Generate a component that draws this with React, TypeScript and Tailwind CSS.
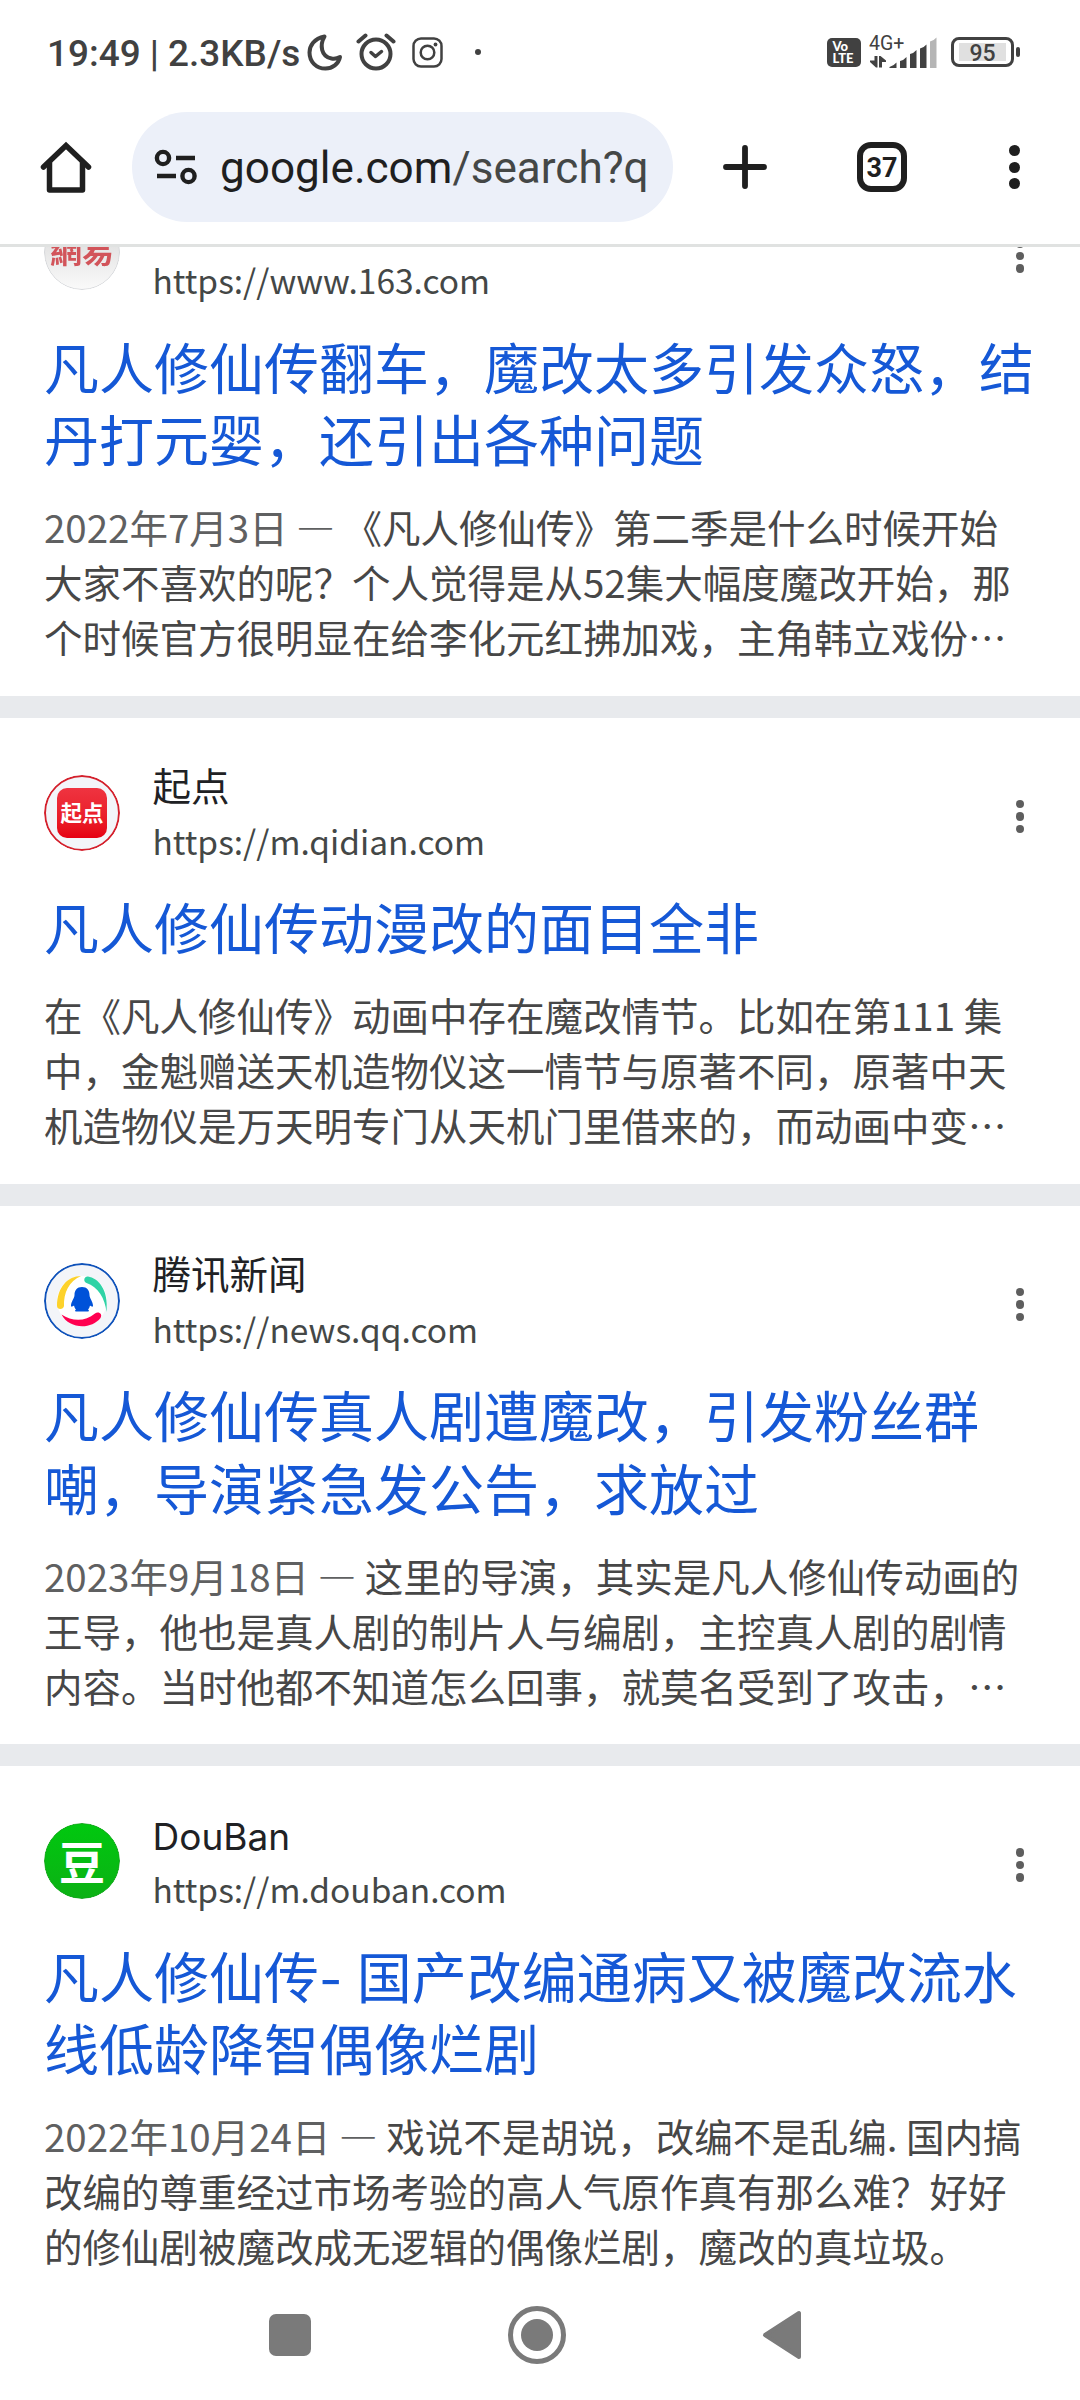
import type { ReactNode } from "react";

interface Result {
  id: string;
  site?: string;
  url: string;
  icon: ReactNode;
  title: string[];
  date?: string;
  snippet: string[];
}

const NeteaseIcon = () => (
  <div className="flex h-full w-full items-center justify-center rounded-full border border-[#d5d7da] bg-linear-to-b from-[#d4d4d4] to-[#fafafa] pb-[7px]">
    <span className="font-['Noto_Sans_CJK_TC',sans-serif] text-[32px] leading-none font-bold whitespace-nowrap text-[#d2545a] blur-[0.7px]">
      網易
    </span>
  </div>
);

const QidianIcon = () => (
  <div className="flex h-full w-full items-center justify-center rounded-full border-2 border-[#d4202c] bg-[#f3f5f9]">
    <div className="flex h-[50px] w-[50px] items-center justify-center rounded-[10px] bg-linear-to-b from-[#ef3340] to-[#e60012] pb-[2px]">
      <span className="text-[21.5px] leading-none font-bold whitespace-nowrap text-white">
        起点
      </span>
    </div>
  </div>
);

const TencentIcon = () => (
  <svg viewBox="0 0 76 76" className="h-full w-full">
    <circle cx="38" cy="38" r="37" fill="#f3f5f9" stroke="#0f52ba" strokeWidth="2" />
    <circle cx="38" cy="38" r="25" fill="#fff" />
    <path d="M37 13C24 13 13 24 13 43c0 4 6.500 4 7 0C19.500 30 25 18 37 13z" fill="#fdd22b" />
    <path d="M44 13.500c10 1.500 21 13 18.500 35.500C61 35 54 24 42.500 20c-4-2-2-7 1.500-6.500z" fill="#2fd3a6" />
    <path d="M17.500 51.500C25 66 47 67 56.500 55c2.500-4-2-7-5.500-4.500C41 59 28 58.500 17.500 51.500z" fill="#ff0050" />
    <path
      d="M38 24c-5 0-7.500 3.500-7.500 8 0 3-3.500 7-3.500 10.500 0 2 1.500 1 3 0 .5 2 1 3 2 4-1 .5-1.500 2 0 2h12c1.500 0 1-1.500 0-2 1-1 1.500-2 2-4 1.500 1 3 2 3 0 0-3.500-3.500-7.500-3.500-10.500 0-4.500-2.500-8-7.500-8z"
      fill="#0052d9"
    />
  </svg>
);

const DoubanIcon = () => (
  <div className="flex h-full w-full items-center justify-center rounded-full border border-[#14a51c] bg-linear-to-b from-[#00c80f] to-[#0bb114] pb-[3px]">
    <span className="text-[46px] leading-none font-bold text-white">豆</span>
  </div>
);

const results: Result[] = [
  {
    id: "netease",
    url: "https://www.163.com",
    icon: <NeteaseIcon />,
    title: ["凡人修仙传翻车，魔改太多引发众怒，结", "丹打元婴，还引出各种问题"],
    date: "2022年7月3日",
    snippet: [
      "《凡人修仙传》第二季是什么时候开始",
      "大家不喜欢的呢？个人觉得是从52集大幅度魔改开始，那",
      "个时候官方很明显在给李化元红拂加戏，主角韩立戏份…",
    ],
  },
  {
    id: "qidian",
    site: "起点",
    url: "https://m.qidian.com",
    icon: <QidianIcon />,
    title: ["凡人修仙传动漫改的面目全非"],
    snippet: [
      "在《凡人修仙传》动画中存在魔改情节。比如在第111 集",
      "中，金魁赠送天机造物仪这一情节与原著不同，原著中天",
      "机造物仪是万天明专门从天机门里借来的，而动画中变…",
    ],
  },
  {
    id: "tencent",
    site: "腾讯新闻",
    url: "https://news.qq.com",
    icon: <TencentIcon />,
    title: ["凡人修仙传真人剧遭魔改，引发粉丝群", "嘲，导演紧急发公告，求放过"],
    date: "2023年9月18日",
    snippet: [
      "这里的导演，其实是凡人修仙传动画的",
      "王导，他也是真人剧的制片人与编剧，主控真人剧的剧情",
      "内容。当时他都不知道怎么回事，就莫名受到了攻击，…",
    ],
  },
  {
    id: "douban",
    site: "DouBan",
    url: "https://m.douban.com",
    icon: <DoubanIcon />,
    title: ["凡人修仙传- 国产改编通病又被魔改流水", "线低龄降智偶像烂剧"],
    date: "2022年10月24日",
    snippet: [
      "戏说不是胡说，改编不是乱编. 国内搞",
      "改编的尊重经过市场考验的高人气原作真有那么难？好好",
      "的修仙剧被魔改成无逻辑的偶像烂剧，魔改的真垃圾。",
    ],
  },
];

function StatusBar() {
  return (
    <div className="flex h-[104px] shrink-0 items-center pr-[60px] pl-[47px] text-[#414141]">
      <span className="w-[259px] pt-[5px] text-[36.9px] leading-none font-medium whitespace-nowrap">
        19:49 | 2.3KB/s
      </span>

      <svg width="38" height="38" viewBox="0 0 38 38" fill="none" stroke="currentColor" strokeWidth="4" strokeLinejoin="round">
        <path d="M18.500 3.500C8 5.500 3.500 13 3.500 19.500 3.500 29 10.500 35.500 19.500 35.500c7 0 13-4.500 14.500-11.500-3 1.700-6 2-8.500 1.500C15 23.500 13.500 12 18.500 3.500z" />
      </svg>

      <svg className="ml-[12px]" width="40" height="40" viewBox="0 0 40 40" fill="none" stroke="currentColor" strokeWidth="4" strokeLinecap="round" strokeLinejoin="round">
        <circle cx="20" cy="22" r="14.500" />
        <path d="M2.500 9.500l7-6M37.500 9.500l-7-6" />
        <path d="M15 20.500l4.500 4 6-5" strokeWidth="3.500" />
      </svg>

      <svg className="ml-[16px]" width="31" height="31" viewBox="0 0 31 31" fill="none" stroke="currentColor" strokeWidth="2.500">
        <rect x="1.500" y="1.500" width="28" height="28" rx="7.500" />
        <circle cx="15.500" cy="15.500" r="6.800" />
        <circle cx="23.500" cy="7.500" r="1.900" fill="currentColor" stroke="none" />
      </svg>

      <div className="ml-[32px] h-[6px] w-[6px] rounded-full bg-[#414141]" />

      <div className="mr-[8px] ml-auto flex h-[29px] w-[34px] flex-col justify-center rounded-[5px] bg-[#414141] pl-[5.500px] font-['Lato',sans-serif] text-[13px] leading-[12px] font-black text-white">
        <span>Vo</span>
        <span>LTE</span>
      </div>

      <svg width="72" height="40" viewBox="0 0 72 40" fill="currentColor">
        <text x="0" y="18" fontSize="19.500">
          4G+
        </text>
        <path d="M5.500 24h3v11.500H7L1 30v-1.500h4.500z" />
        <path d="M10 35.500h3V30h4v-1.500L11.500 24H10z" />
        <path d="M20.500 36v-1q4-1 7-4.500V36z" />
        <path d="M31 36v-7q4-1 6.500-4v11z" />
        <path d="M41 36V22q4-1 6.500-4v18z" />
        <path d="M51 36V16.500q4-1 6.500-4V36z" />
        <path d="M61 36V9.500q4-1 6.500-4V36z" fill="#b5b5b5" />
      </svg>

      <div className="ml-[10px] flex h-[30px] w-[63px] items-center justify-center rounded-[8px] border-[3px] border-[#414141]">
        <span className="flex h-[18px] w-[47px] items-center justify-center bg-[#e0e0e0] pt-[3px] text-[23px] leading-none font-medium">
          95
        </span>
      </div>
      <div className="ml-[2px] h-[10px] w-[4px] rounded-[2px] bg-[#414141]" />
    </div>
  );
}

function Toolbar() {
  return (
    <div className="flex h-[143px] shrink-0 items-center border-b-[3px] border-[#e0e2e1] pb-[14px] text-[#1f1f1f]">
      <svg className="ml-[40px] shrink-0" width="52" height="52" viewBox="0 0 52 52" fill="none" stroke="currentColor" strokeWidth="5.500" strokeLinecap="round" strokeLinejoin="round">
        <path d="M3.500 26L26 4.500 48.500 26" strokeLinejoin="miter" />
        <path d="M9.500 22v27h33V22" />
      </svg>

      <div className="ml-[40px] flex h-[110px] w-[541px] shrink-0 items-center rounded-full bg-[#ecf0f9] pl-[22px]">
        <svg width="44" height="36" viewBox="0 0 44 36" fill="none" stroke="currentColor" strokeWidth="4.400">
          <circle cx="9" cy="9" r="6.100" />
          <path d="M22 9h19M3 27h19" />
          <circle cx="34.500" cy="27" r="6.100" />
        </svg>
        <span className="ml-[22px] pt-[3px] text-[44.1px] leading-none whitespace-nowrap">
          google.com<span className="text-[#444746]">/search?q</span>
        </span>
      </div>

      <svg className="ml-[49px] shrink-0" width="46" height="46" viewBox="0 0 46 46" stroke="currentColor" strokeWidth="5.800" strokeLinecap="round">
        <path d="M23 4v38M4 23h38" />
      </svg>

      <div className="ml-[89px] flex h-[50px] w-[50px] shrink-0 items-center justify-center rounded-[14px] border-[6px] border-[#1f1f1f] pt-[2px] text-[27px] leading-none font-bold">
        37
      </div>

      <div className="ml-[102px] flex flex-col gap-[5.500px]">
        <i className="h-[11px] w-[11px] rounded-full bg-[#1f1f1f]" />
        <i className="h-[11px] w-[11px] rounded-full bg-[#1f1f1f]" />
        <i className="h-[11px] w-[11px] rounded-full bg-[#1f1f1f]" />
      </div>
    </div>
  );
}

function ResultCard({ result }: { result: Result }) {
  return (
    <article className="shrink-0 border-b-[22px] border-[#e8eaed] bg-white px-[44px] pt-[43px] pb-[31.500px] font-['Noto_Sans_CJK_SC',sans-serif]">
      <div className="flex h-[128.500px]">
        <div className="mt-[14px] h-[76px] w-[76px] shrink-0 overflow-hidden rounded-full">
          {result.icon}
        </div>
        <div className="ml-[32.500px] flex-1 whitespace-nowrap">
          <div
            className={
              result.site === "DouBan"
                ? "h-[55px] font-['Inter',sans-serif] text-[37px] leading-[55px] text-[#202124]"
                : "h-[55px] text-[38.5px] leading-[46px] text-[#202124]"
            }
          >
            {result.site}
          </div>
          <div className="text-[33.5px] leading-[50px] text-[#444746]">
            {result.url}
          </div>
        </div>
        <div className="mt-[39px] mr-[12px] flex flex-col gap-[4px]">
          <i className="h-[8.500px] w-[8.500px] rounded-full bg-[#5e5e5e]" />
          <i className="h-[8.500px] w-[8.500px] rounded-full bg-[#5e5e5e]" />
          <i className="h-[8.500px] w-[8.500px] rounded-full bg-[#5e5e5e]" />
        </div>
      </div>

      <h3 className="text-[55px] leading-[72.5px] font-normal whitespace-nowrap text-[#1558d6]">
        {result.title.map((line) => (
          <div key={line}>
            {line.split(/(- )/).map((part) =>
              part === "- " ? (
                <span key={part} className="font-['Inter',sans-serif] text-[51px] leading-none">
                  {part}
                </span>
              ) : (
                part
              )
            )}
          </div>
        ))}
      </h3>

      <div className="mt-[25.500px] text-[38.5px] leading-[55px] whitespace-nowrap text-[#474747]">
        {result.snippet.map((line, i) => (
          <div key={line}>
            {i === 0 && result.date && (
              <span className="text-[#5f6061]">{result.date} — </span>
            )}
            {line}
          </div>
        ))}
      </div>
    </article>
  );
}

function NavBar() {
  return (
    <div className="z-10 flex h-[124px] shrink-0 items-center bg-white pb-[6px] pl-[269px]">
      <div className="h-[42px] w-[42px] rounded-[7px] bg-[#7a7a7a]" />
      <div className="ml-[197px] flex h-[58px] w-[58px] items-center justify-center rounded-full border-[5px] border-[#7a7a7a]">
        <div className="h-[32px] w-[32px] rounded-full bg-[#7a7a7a]" />
      </div>
      <svg className="ml-[196px]" width="40" height="50" viewBox="0 0 40 50">
        <path d="M3 25L37 3v44z" fill="#7a7a7a" stroke="#7a7a7a" strokeWidth="4" strokeLinejoin="round" />
      </svg>
    </div>
  );
}

export default function App() {
  return (
    <div
      lang="zh-CN"
      className="flex h-[2400px] w-[1080px] flex-col overflow-hidden bg-white font-['Roboto','Noto_Sans_CJK_SC',sans-serif]"
    >
      <StatusBar />
      <Toolbar />
      <main className="flex min-h-0 flex-1 flex-col overflow-hidden">
        {/* the list is scrolled, so the first card starts above the viewport */}
        <div className="-mt-[90px] flex flex-col">
          {results.map((result) => (
            <ResultCard key={result.id} result={result} />
          ))}
        </div>
      </main>
      <NavBar />
    </div>
  );
}
